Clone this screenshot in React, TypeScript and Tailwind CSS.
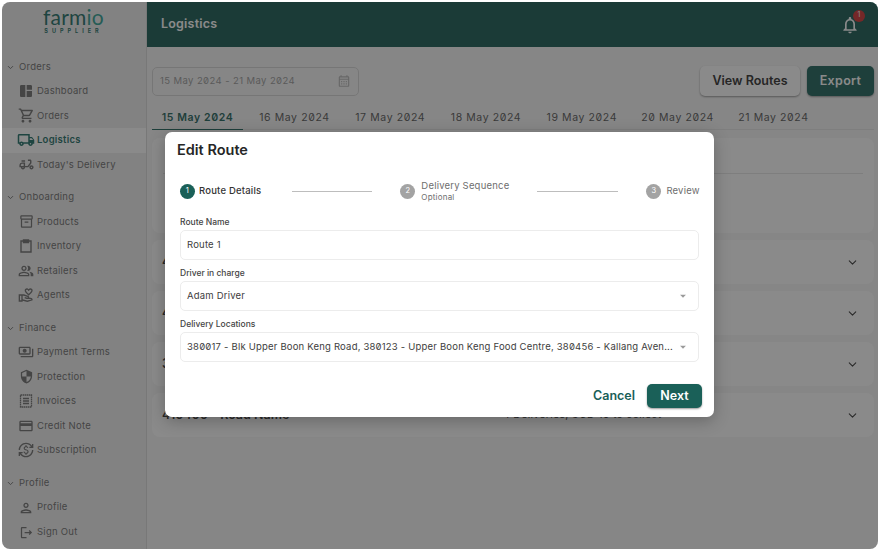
import { ChevronDown } from "lucide-react";
import { ReactNode } from "react";
import {
  MdArrowDropDown,
  MdOutlineCalendarMonth,
  MdOutlineCreditCard,
  MdOutlineCurrencyExchange,
  MdOutlineDeliveryDining,
  MdOutlineInventory2,
  MdOutlineLocalShipping,
  MdOutlineLogout,
  MdOutlineNotifications,
  MdOutlinePayments,
  MdOutlinePeopleAlt,
  MdOutlinePerson,
  MdOutlineShoppingCart,
  MdOutlineVolunteerActivism,
  MdSecurity,
  MdSpaceDashboard,
} from "react-icons/md";

const ClipboardIcon = () => (
  <svg width="16" height="16" viewBox="0 0 16 16" fill="none" stroke="currentColor" strokeWidth="1.4">
    <path d="M5 3H3v11h10V3h-2" />
    <path d="M5.5 2h5v2.5h-5z" fill="currentColor" />
  </svg>
);

const InvoiceIcon = () => (
  <svg width="16" height="16" viewBox="0 0 16 16" fill="none" stroke="currentColor" strokeWidth="1.3">
    <path d="M2.5 2h11v12h-11z" strokeDasharray="1.6 0.5" />
    <path d="M5 5.5h6M5 8h6M5 10.5h6" />
  </svg>
);

interface NavGroup {
  title: string;
  items: { label: string; icon: ReactNode; active?: boolean }[];
}

const groups: NavGroup[] = [
  {
    title: "Orders",
    items: [
      { label: "Dashboard", icon: <MdSpaceDashboard size={16} /> },
      { label: "Orders", icon: <MdOutlineShoppingCart size={17} /> },
      { label: "Logistics", icon: <MdOutlineLocalShipping size={18} />, active: true },
      { label: "Today's Delivery", icon: <MdOutlineDeliveryDining size={17} /> },
    ],
  },
  {
    title: "Onboarding",
    items: [
      { label: "Products", icon: <MdOutlineInventory2 size={15} /> },
      { label: "Inventory", icon: <ClipboardIcon /> },
      { label: "Retailers", icon: <MdOutlinePeopleAlt size={16} /> },
      { label: "Agents", icon: <MdOutlineVolunteerActivism size={16} /> },
    ],
  },
  {
    title: "Finance",
    items: [
      { label: "Payment Terms", icon: <MdOutlinePayments size={16} /> },
      { label: "Protection", icon: <MdSecurity size={15} /> },
      { label: "Invoices", icon: <InvoiceIcon /> },
      { label: "Credit Note", icon: <MdOutlineCreditCard size={16} /> },
      { label: "Subscription", icon: <MdOutlineCurrencyExchange size={16} /> },
    ],
  },
  {
    title: "Profile",
    items: [
      { label: "Profile", icon: <MdOutlinePerson size={16} /> },
      { label: "Sign Out", icon: <MdOutlineLogout size={15} /> },
    ],
  },
];

const dates = [
  "15 May 2024",
  "16 May 2024",
  "17 May 2024",
  "18 May 2024",
  "19 May 2024",
  "20 May 2024",
  "21 May 2024",
];

const routes = [
  { code: "416100 - Road Name", info: "4 Deliveries, SGD 10 to collect" },
  { code: "416200 - Road Name", info: "4 Deliveries, SGD 10 to collect" },
  { code: "316300 - Road Name", info: "4 Deliveries, SGD 10 to collect" },
  { code: "416400 - Road Name", info: "4 Deliveries, SGD 10 to collect" },
];

const Sidebar = () => (
  <aside className="flex w-[145px] shrink-0 flex-col border-r border-[#d8d8d8] bg-[#efefef] text-[9.5px] tracking-[0.25px] text-[#6c6c6c]">
    <div className="flex h-[53px] shrink-0 flex-col items-center pt-[4.5px] pr-[1px]">
      <div className="text-[21px] leading-[20px] font-normal tracking-[0.2px] text-[#1a6c64] [font-family:Lato,sans-serif]">
        farm<span className="text-[#2a9d8f]">io</span>
      </div>
      <div className="mt-[1.5px] text-[5.5px] leading-[6px] font-bold tracking-[4px] text-[#1a6c64]">SUPPLIER</div>
    </div>
    {groups.map((group) => (
      <div key={group.title} className="mb-[8.6px] flex shrink-0 flex-col">
        <div className="flex h-[24px] items-center gap-[4px] pl-[4px]">
          <ChevronDown size={9} strokeWidth={2.5} />
          <span>{group.title}</span>
        </div>
        {group.items.map((item) => (
          <div
            key={item.label}
            className={`flex h-[24.5px] items-center ${item.active ? "bg-white font-semibold text-[#1a6c64]" : ""}`}
          >
            <span className="flex w-[35px] shrink-0 justify-center pl-[13px]">{item.icon}</span>
            <span>{item.label}</span>
          </div>
        ))}
      </div>
    ))}
  </aside>
);

const Field = ({ label, value, select }: { label: string; value: string; select?: boolean }) => (
  <div className="flex flex-col">
    <label className="mb-[1px] text-[8.5px] leading-[13px] font-medium text-[#444]">{label}</label>
    <div className="flex h-[30px] items-center justify-between rounded-[5px] border border-[#ececec] pr-[8px] pl-[6px] text-[9.5px] tracking-[0.2px] text-[#3d3d3d] slashed-zero">
      <span className="whitespace-nowrap">{value}</span>
      {select && <MdArrowDropDown size={14} className="text-[#9a9a9a]" />}
    </div>
  </div>
);

const StepDot = ({ n, active }: { n: number; active?: boolean }) => (
  <span
    className={`flex h-[15px] w-[15px] shrink-0 items-center justify-center rounded-full text-[7.5px] text-white ${active ? "bg-[#1a6058]" : "bg-[#a3a3a3]"}`}
  >
    {n}
  </span>
);

const EditRouteModal = () => (
  <div className="absolute inset-0 bg-[#222222]/[0.53]">
    <div className="absolute top-[130px] left-[163px] flex h-[285px] w-[549px] flex-col rounded-[7px] bg-white px-[15px] shadow-[0_4px_16px_rgba(0,0,0,0.25)]">
      <h2 className="-ml-[3px] pt-[9px] text-[14.5px] leading-[18px] font-semibold text-[#262626]">Edit Route</h2>
      <div className="mt-[20px] flex h-[24px] items-center text-[9.5px] tracking-[0.2px] whitespace-nowrap">
        <StepDot n={1} active />
        <span className="ml-[4px] font-medium text-[#333]">Route Details</span>
        <span className="ml-[31px] h-px w-[80px] shrink-0 bg-[#bdbdbd]" />
        <span className="ml-[28px]">
          <StepDot n={2} />
        </span>
        <span className="ml-[6px] flex flex-col text-[#6e6e6e]">
          <span className="leading-[12px]">Delivery Sequence</span>
          <span className="text-[8px] leading-[11px]">Optional</span>
        </span>
        <span className="ml-[28px] h-px w-[81px] shrink-0 bg-[#bdbdbd]" />
        <span className="ml-[28px]">
          <StepDot n={3} />
        </span>
        <span className="ml-[5px] text-[#6e6e6e]">Review</span>
      </div>
      <div className="mt-[13px] flex flex-col gap-[7px]">
        <Field label="Route Name" value="Route 1" />
        <Field label="Driver in charge" value="Adam Driver" select />
        <Field
          label="Delivery Locations"
          value="380017 - Blk Upper Boon Keng Road, 380123 - Upper Boon Keng Food Centre, 380456 - Kallang Aven..."
          select
        />
      </div>
      <div className="mt-[22px] -mr-[3px] flex items-center justify-end gap-[12px]">
        <button className="text-[12.5px] font-semibold text-[#1a6058]">Cancel</button>
        <button className="flex h-[24px] w-[55px] items-center justify-center rounded-[5px] bg-[#1a6058] text-[12.5px] font-semibold text-white shadow-[0_1px_2px_rgba(0,0,0,0.4)]">
          Next
        </button>
      </div>
    </div>
  </div>
);

export default function App() {
  return (
    <div className="h-[552px] w-[879px] bg-white p-[2px_1px_3px_2px] [font-family:Inter,sans-serif]">
      <div className="relative flex h-full w-full overflow-hidden rounded-[8px]">
        <Sidebar />
        <main className="flex min-w-0 flex-1 flex-col bg-[#f7f7f7]">
          <header className="flex h-[45px] shrink-0 items-center justify-between bg-[#145850] pr-[18px] pl-[14px] text-white">
            <span className="text-[12.5px] font-semibold tracking-[0.2px]">Logistics</span>
            <div className="relative">
              <MdOutlineNotifications size={20} />
              <span className="absolute -top-[5px] -right-[5px] flex h-[12px] w-[12px] items-center justify-center rounded-full bg-[#d32f2f] text-[7px]">
                1
              </span>
            </div>
          </header>
          <div className="flex flex-1 flex-col pr-[4px] pl-[5px]">
            <div className="mt-[19px] flex h-[30px] items-center justify-between">
              <div className="flex h-[29px] w-[207px] items-center justify-between rounded-[5px] border border-[#d5d5d5] pr-[7px] pl-[7px] text-[9.5px] tracking-[0.4px] text-[#9a9a9a] slashed-zero">
                <span>15 May 2024 - 21 May 2024</span>
                <MdOutlineCalendarMonth size={14} className="text-[#b5b5b5]" />
              </div>
              <div className="flex gap-[7px]">
                <button className="h-[30px] w-[100px] rounded-[5px] bg-white text-[12.5px] font-semibold text-[#2b2b2b] shadow-[0_1px_2px_rgba(0,0,0,0.4)]">
                  View Routes
                </button>
                <button className="h-[30px] w-[67px] rounded-[5px] bg-[#1a6058] text-[12.5px] font-semibold tracking-[0.3px] text-white shadow-[0_1px_2px_rgba(0,0,0,0.4)]">
                  Export
                </button>
              </div>
            </div>
            <div className="mt-[9px] flex h-[25px] border-b border-[#e6e6e6] text-[10.5px] tracking-[0.6px] text-[#555] slashed-zero">
              {dates.map((date, i) => (
                <div
                  key={date}
                  className={
                    i === 0
                      ? "mr-[3.5px] -mb-px flex h-[25px] w-[91px] justify-center border-b border-[#1a6058] pt-[5px] font-semibold text-[#1a6058]"
                      : "flex w-[95.8px] justify-center pt-[5px]"
                  }
                >
                  {date}
                </div>
              ))}
            </div>
            <section className="mt-[8px] flex flex-col gap-[7px]">
              <div className="h-[95px] rounded-[8px] bg-white px-[11px] pt-[35px]">
                <div className="h-px bg-[#e6e6e6]" />
              </div>
              {routes.map((route) => (
                <div
                  key={route.code}
                  className="flex h-[44px] items-center rounded-[8px] bg-white pr-[15px] pl-[10px] text-[#333]"
                >
                  <span className="w-[341px] text-[12.5px] font-semibold">{route.code}</span>
                  <span className="flex-1 text-[10.5px] tracking-[0.3px]">{route.info}</span>
                  <ChevronDown size={13} />
                </div>
              ))}
            </section>
          </div>
        </main>
        <EditRouteModal />
      </div>
    </div>
  );
}
